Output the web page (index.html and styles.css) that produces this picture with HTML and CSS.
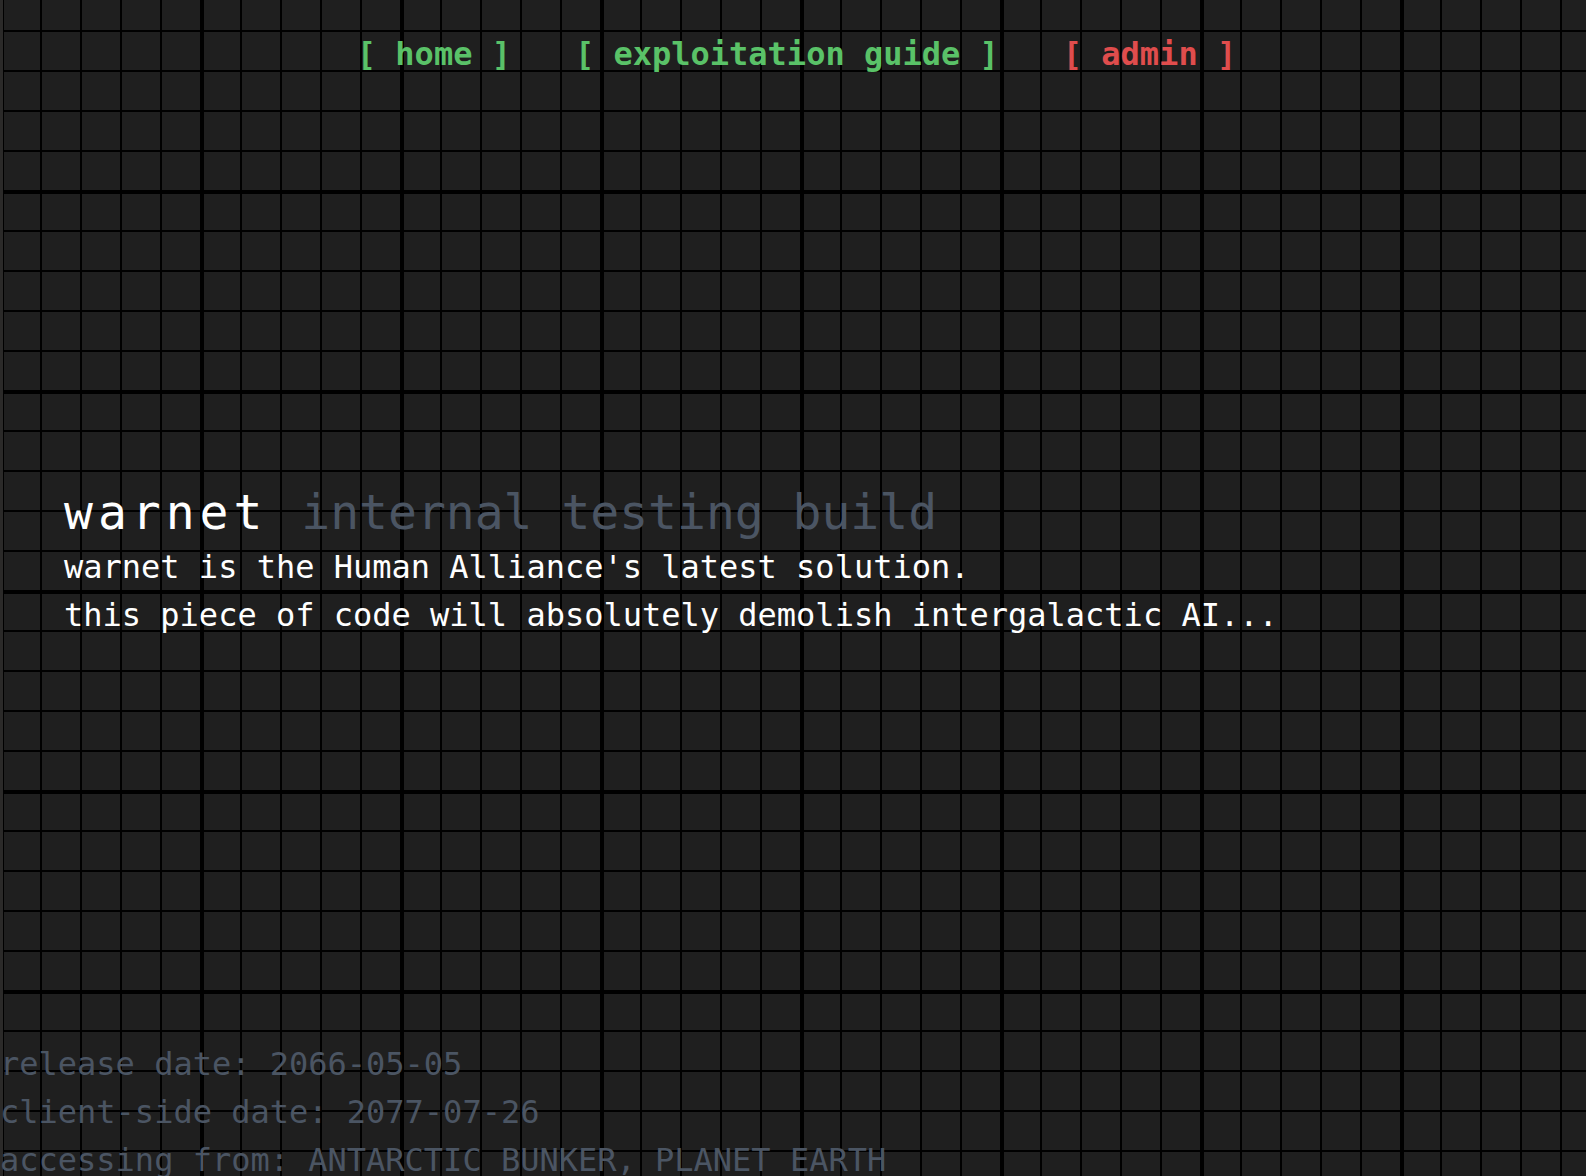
FILE: index.html
```html
<!DOCTYPE html>
<html lang="en">
<head>
<meta charset="utf-8">
<title>warnet</title>
<link rel="stylesheet" href="styles.css">
</head>
<body>
<nav class="nav">
  <a class="nav-link" href="#">[ home ]</a>
  <a class="nav-link" href="#">[ exploitation guide ]</a>
  <a class="nav-link nav-link-admin" href="#">[ admin ]</a>
</nav>
<main class="hero">
  <h1 class="hero-title"><span class="hero-name">warnet </span><span class="hero-sub">internal testing build</span></h1>
  <p class="hero-text">warnet is the Human Alliance's latest solution.</p>
  <p class="hero-text">this piece of code will absolutely demolish intergalactic AI...</p>
</main>
<footer class="footer">
  <p class="footer-line">release date: 2066-05-05</p>
  <p class="footer-line">client-side date: 2077-07-26</p>
  <p class="footer-line">accessing from: ANTARCTIC BUNKER, PLANET EARTH</p>
</footer>
</body>
</html>
```

FILE: styles.css
```css
html {
  background-color: #1f1f1f;
  background-image:
    linear-gradient(to right, #000 4px, transparent 4px),
    linear-gradient(to bottom, #000 4px, transparent 4px),
    linear-gradient(to right, #000 2px, transparent 2px),
    linear-gradient(to bottom, #000 2px, transparent 2px);
  background-size: 200px 200px, 200px 200px, 40px 40px, 40px 40px;
  background-position: 0 -10px, 0 -10px, 0 -10px, 0 -10px;
}

body {
  margin: 0;
  font-family: "DejaVu Sans Mono", "Liberation Mono", monospace;
  font-size: 32px;
  line-height: 48px;
  color: #ffffff;
  box-shadow: inset 3px 0 0 #2b2a29;
}

.nav {
  display: flex;
  justify-content: center;
  gap: 64px;
  padding: 30px 0 0 7px;
}

.nav-link {
  font-weight: bold;
  color: #5ac268;
  text-decoration: none;
  white-space: pre;
}

.nav-link-admin {
  color: #e04d4d;
}

.hero {
  padding: 405px 0 401px 64px;
}

.hero-title {
  margin: 0 0 2px;
  font-size: 48px;
  line-height: 58px;
  font-weight: normal;
  white-space: pre;
}

.hero-name {
  letter-spacing: 5px;
  color: #ffffff;
}

.hero-sub {
  color: #4b5563;
}

.hero-text {
  margin: 0;
  white-space: pre;
}

.footer {
  color: #4b5563;
}

.footer-line {
  margin: 0;
  white-space: pre;
}
```
